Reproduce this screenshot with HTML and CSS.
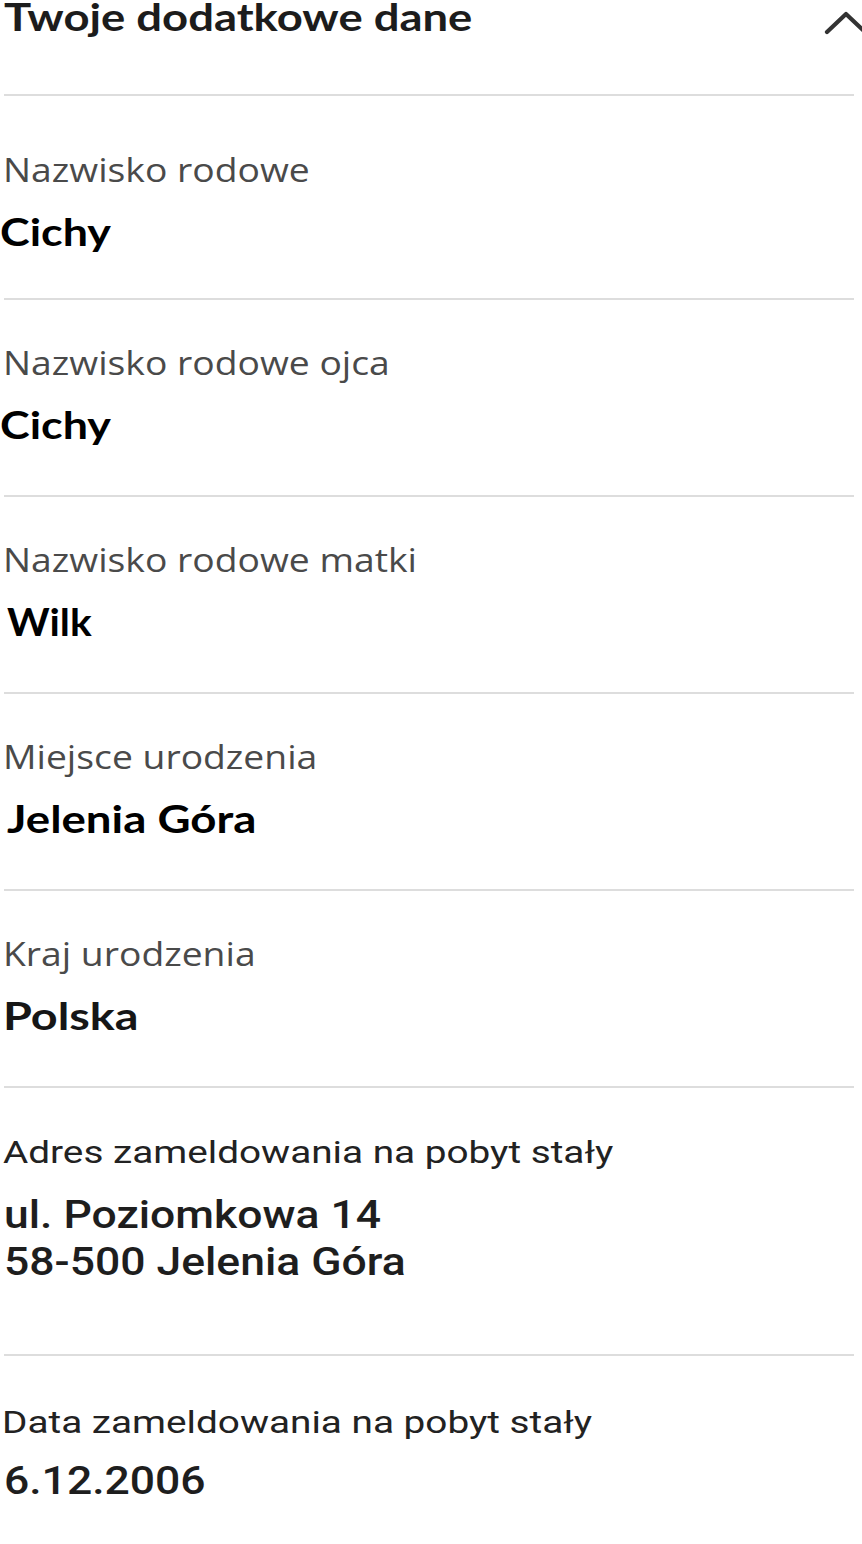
FILE: index.html
```html
<!DOCTYPE html>
<html lang="pl">
<head>
<meta charset="utf-8">
<title>Twoje dodatkowe dane</title>
<link rel="stylesheet" href="styles.css">
</head>
<body>
<main class="panel">
  <header class="panel-head">
    <h2 class="panel-title">Twoje dodatkowe dane</h2>
    <svg class="chevron" width="44" height="26" viewBox="0 0 44 26" aria-hidden="true">
      <polyline points="3,22 22,4 41,22" fill="none" stroke="#333" stroke-width="4.2" stroke-linecap="round" stroke-linejoin="round"/>
    </svg>
  </header>

  <section class="item item--first">
    <div class="label">Nazwisko rodowe</div>
    <div class="value value--shift-l">Cichy</div>
  </section>

  <section class="item">
    <div class="label">Nazwisko rodowe ojca</div>
    <div class="value value--shift-l">Cichy</div>
  </section>

  <section class="item">
    <div class="label">Nazwisko rodowe matki</div>
    <div class="value value--shift-r value--narrow">Wilk</div>
  </section>

  <section class="item">
    <div class="label">Miejsce urodzenia</div>
    <div class="value value--shift-r value--wide">Jelenia Góra</div>
  </section>

  <section class="item">
    <div class="label">Kraj urodzenia</div>
    <div class="value value--alt">Polska</div>
  </section>

  <section class="item item--roboto item--tall">
    <div class="label">Adres zameldowania na pobyt stały</div>
    <div class="value value--address">ul. Poziomkowa 14<br>58-500 Jelenia Góra</div>
  </section>

  <section class="item item--roboto item--last">
    <div class="label label--left">Data zameldowania na pobyt stały</div>
    <div class="value">6.12.2006</div>
  </section>
</main>
</body>
</html>
```

FILE: styles.css
```css
*, *::before, *::after {
  box-sizing: border-box;
}

html, body {
  margin: 0;
  padding: 0;
  background: #ffffff;
}

body {
  width: 862px;
  height: 1544px;
  overflow: hidden;
  font-family: "Open Sans", "Noto Sans", "Liberation Sans", sans-serif;
}

.panel {
  display: flex;
  flex-direction: column;
}

.panel-head {
  display: flex;
  justify-content: space-between;
  align-items: flex-start;
  height: 102px;
  margin-top: -8px;
  padding-left: 4px;
}

.panel-title {
  margin: 0;
  font-family: "Lato", "Open Sans", sans-serif;
  font-weight: 700;
  font-size: 38px;
  line-height: 48px;
  color: #1c1c1c;
  transform: scaleX(1.195);
  transform-origin: left center;
  white-space: nowrap;
}

.chevron {
  margin-top: 18px;
  margin-right: -6px;
  flex: none;
}

.item {
  display: flex;
  flex-direction: column;
  align-items: flex-start;
  border-top: 2px solid #dddddd;
  margin-right: 8px;
  margin-left: 4px;
  padding-top: 43px;
  height: 197px;
}

.item--first {
  padding-top: 54px;
  height: 204px;
}

.item--tall {
  height: 268px;
}

.label {
  margin-left: -1px;
  font-size: 32px;
  line-height: 40px;
  color: #4a4a4a;
  white-space: nowrap;
  transform: scaleX(1.165);
  transform-origin: left center;
}

.value {
  margin-top: 17px;
  font-family: "Lato", "Open Sans", sans-serif;
  font-weight: 700;
  font-size: 38px;
  line-height: 48px;
  color: #000000;
  white-space: nowrap;
  transform: scaleX(1.18);
  transform-origin: left center;
}

.value--shift-l {
  margin-left: -4.5px;
}

.value--shift-r {
  margin-left: 2.5px;
}

.value--narrow {
  transform: scaleX(1.07);
}

.value--wide {
  transform: scaleX(1.2);
}

.value--alt {
  margin-left: -1.5px;
  color: #161616;
  transform: scaleX(1.23);
}

.item--roboto {
  padding-top: 44px;
}

.item--roboto .label {
  margin-left: -1px;
  font-family: "Roboto", "Liberation Sans", sans-serif;
  color: #222222;
  transform: scaleX(1.21);
}

.item--roboto .value {
  margin-top: 16px;
  margin-left: 0;
  font-family: "Roboto", "Liberation Sans", sans-serif;
  font-weight: 500;
  color: #1e1e1e;
  line-height: 47px;
  transform: scaleX(1.17);
}

.item--roboto .value--address {
  margin-top: 20px;
}

.item--last {
  padding-top: 46px;
}

.item--roboto .label--left {
  margin-left: -2.5px;
}
```
